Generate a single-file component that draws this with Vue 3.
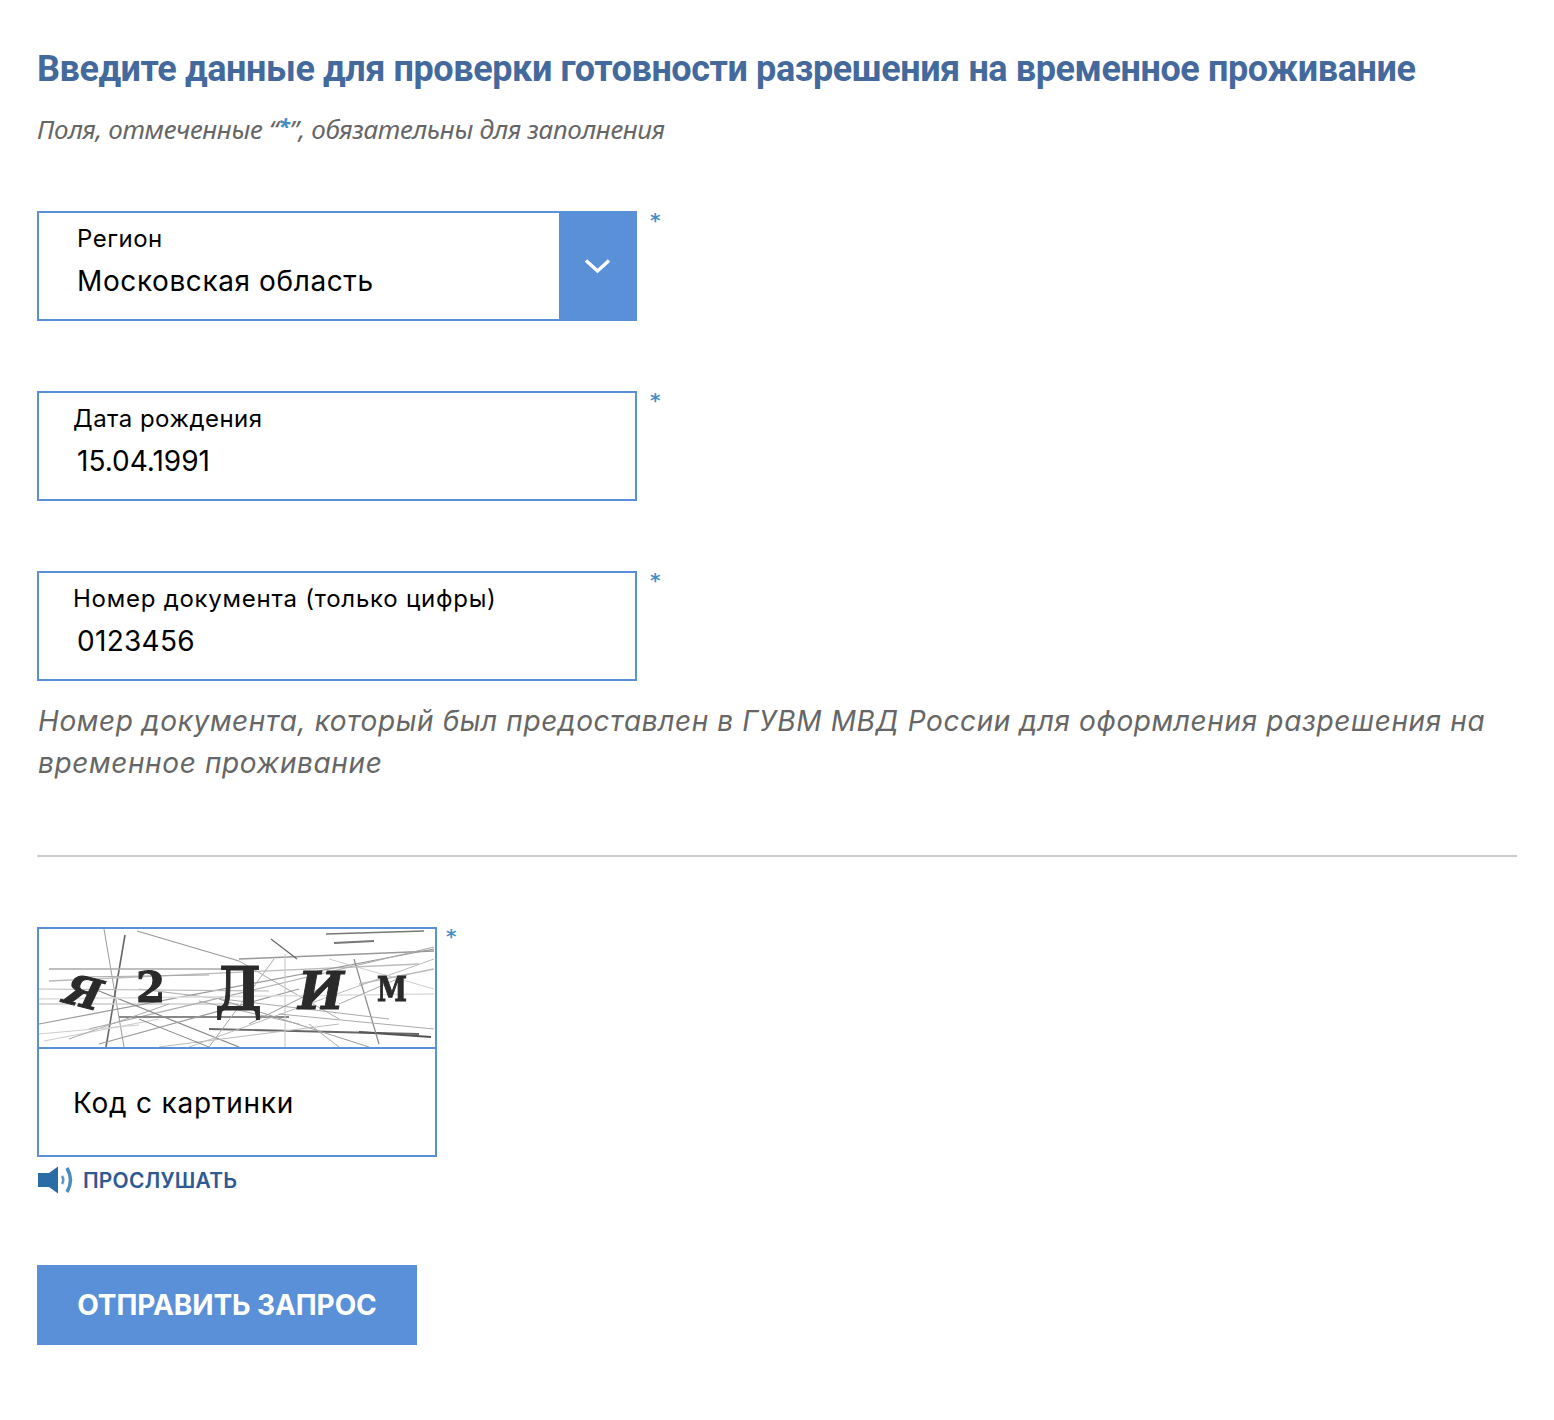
<script setup>
const lines = [
  [65,0,85,118,'#999',1],[86,6,67,118,'#666',1.6],[98,2,200,32,'#999',1.2],[200,32,300,90,'#aaa',1],[10,40,205,40,'#aaa',1.6],[10,52,380,35,'#bbb',1.4],
  [287,5,385,2,'#777',1.6],[295,14,335,12,'#777',2],[200,30,395,22,'#999',1.4],[0,75,200,75,'#ccc',1.4],[0,95,395,20,'#999',1.2],[50,100,395,18,'#aaa',1.2],
  [55,60,200,118,'#888',1.2],[80,88,250,88,'#888',1.8],[60,115,260,60,'#999',1.2],[170,100,380,105,'#666',1.8],[320,103,392,108,'#555',1.8],
  [150,118,395,30,'#bbb',1],[180,70,330,118,'#999',1],[246,25,246,118,'#ccc',1.2],[235,30,170,118,'#aaa',1],[315,30,340,115,'#888',1.2],
  [232,10,258,30,'#666',1.2],[5,112,120,90,'#ccc',1.2],[120,118,300,95,'#bbb',1],[290,30,395,60,'#ccc',1],[100,60,350,90,'#aaa',1],[0,70,395,65,'#ddd',1.6],
  [40,48,170,46,'#aaa',1],[0,60,230,62,'#bbb',1.2],[30,110,130,75,'#aaa',1],[100,90,170,118,'#888',1],[270,95,300,118,'#aaa',1],[240,85,395,100,'#aaa',1],
  [160,72,260,95,'#aaa',1],[300,75,370,45,'#aaa',1],[0,105,100,96,'#ccc',1],[210,95,280,60,'#999',1],[320,55,395,40,'#bbb',1.4]
]
const fields = [
  { label: 'Дата рождения', value: '15.04.1991', cls: 'date' },
  { label: 'Номер документа (только цифры)', value: '0123456', cls: 'doc' }
]
</script>

<template>
  <main class="page">
    <h1 class="title">Введите данные для проверки готовности разрешения на временное проживание</h1>
    <p class="note">Поля, отмеченные “<span class="note-star">*</span>”, обязательны для заполнения</p>

    <div class="row first">
      <div class="field select">
        <div class="select-text">
          <div class="label">Регион</div>
          <div class="value">Московская область</div>
        </div>
        <div class="arrow">
          <svg width="28" height="18" viewBox="0 0 28 18"><path d="M2 3.500 13.500 14 25 3.500" fill="none" stroke="#fff" stroke-width="3.500"/></svg>
        </div>
      </div>
      <span class="star">*</span>
    </div>

    <div v-for="f in fields" :key="f.cls" class="row next">
      <div class="field text" :class="f.cls">
        <div class="label">{{ f.label }}</div>
        <div class="value">{{ f.value }}</div>
      </div>
      <span class="star">*</span>
    </div>

    <p class="hint">Номер документа, который был предоставлен в ГУВМ МВД России для оформления разрешения на временное проживание</p>
    <hr class="divider" />

    <div class="row">
      <div class="captcha">
        <div class="captcha-img">
          <svg width="398" height="118" viewBox="0 0 398 118">
            <line v-for="(l, i) in lines" :key="i" :x1="l[0]" :y1="l[1]" :x2="l[2]" :y2="l[3]" :stroke="l[4]" :stroke-width="l[5]" />
            <text x="24" y="78" class="c1" transform="rotate(14 44 70)">Я</text>
            <text x="97" y="73" class="c2">2</text>
            <text x="176" y="81" class="c3" textLength="47" lengthAdjust="spacingAndGlyphs">Д</text>
            <text x="259" y="80" class="c4" textLength="46" lengthAdjust="spacingAndGlyphs">И</text>
            <text x="338" y="72" class="c5" textLength="30" lengthAdjust="spacingAndGlyphs">М</text>
          </svg>
        </div>
        <div class="captcha-input">Код с картинки</div>
      </div>
      <span class="star cap-star">*</span>
    </div>

    <a class="listen">
      <svg width="38" height="28" viewBox="0 0 38 28">
        <g class="speaker">
          <path d="M1 7h11l9-6.500v27L12 21H1z" fill="#2a6ca5"/>
          <path d="M25 10q2.500 4 0 8" fill="none" stroke="#5b95c4" stroke-width="2.500"/>
          <path d="M30 2q7 12 0 24" fill="none" stroke="#4d8bbd" stroke-width="3.500"/>
        </g>
      </svg>
      <span>ПРОСЛУШАТЬ</span>
    </a>

    <button class="submit">ОТПРАВИТЬ ЗАПРОС</button>
  </main>
</template>

<style scoped>
.page {
  box-sizing: border-box;
  width: 1554px;
  height: 1420px;
  padding: 46px 37px 0;
  background: #fff;
  font-family: Inter, "Open Sans", sans-serif;
  color: #000;
}
.title {
  margin: 0;
  font-family: Roboto, sans-serif;
  font-weight: 700;
  font-size: 36px;
  line-height: 46px;
  letter-spacing: -0.41px;
  color: #44699c;
  white-space: nowrap;
}
.note {
  margin: 18px 0 0;
  font-family: "Noto Sans", sans-serif;
  font-style: italic;
  font-size: 26px;
  line-height: 38px;
  letter-spacing: -0.34px;
  color: #666;
}
.note-star { color: #3f8cc7; position: relative; top: -5px; font-size: 22px; line-height: 0; font-weight: 700; }
.row { display: flex; align-items: flex-start; }
.first { margin-top: 63px; }
.next { margin-top: 70px; }
.star {
  margin-left: 13px;
  font-family: "DejaVu Sans", sans-serif;
  font-size: 20px;
  line-height: 18px;
  font-weight: 700;
  color: #4a8fc4;
}
.cap-star { margin-left: 9px; }
.field {
  box-sizing: border-box;
  width: 600px;
  height: 110px;
  border: 2px solid #5a90d7;
  background: #fff;
}
.select { display: flex; }
.select-text { flex: 1; padding: 11px 0 0 38px; }
.arrow {
  width: 78px;
  margin: -2px -2px -2px 0;
  background: #5a90d7;
  display: flex;
  align-items: center;
  justify-content: center;
}
.text { padding: 11px 0 0 34px; }
.label { font-size: 24px; line-height: 30px; letter-spacing: 0.48px; }
.doc .label { letter-spacing: 0.75px; }
.value { margin-top: 6px; font-size: 28px; line-height: 42px; letter-spacing: 0.6px; }
.date .value { padding-left: 4px; letter-spacing: 0; }
.doc .value { padding-left: 4px; letter-spacing: 0.3px; }
.hint {
  margin: 19px 0 0 1px;
  font-style: italic;
  font-size: 28px;
  line-height: 42px;
  letter-spacing: 0.62px;
  color: #666;
}
.divider {
  margin: 71px 0 70px;
  border: 0;
  height: 2px;
  width: 1480px;
  background: #ccc;
}
.captcha {
  box-sizing: border-box;
  width: 400px;
  height: 230px;
  border: 2px solid #5a90d7;
}
.captcha-img {
  height: 118px;
  border-bottom: 2px solid #5a90d7;
  overflow: hidden;
}
.captcha-img svg { display: block; filter: blur(0.6px); }
.captcha-img text { font-family: "DejaVu Serif", serif; font-weight: 700; fill: #2a2a2a; stroke: #2a2a2a; stroke-width: 1px; }
.c1 { font-size: 42px; font-style: italic; }
.c2 { font-size: 42px; }
.c3 { font-size: 60px; }
.c4 { font-size: 52px; font-style: italic; }
.c5 { font-size: 33px; }
.captcha-input {
  height: 100px;
  box-sizing: border-box;
  padding: 33px 0 0 34px;
  font-size: 28px;
  line-height: 42px;
  letter-spacing: 0.78px;
}
.speaker { filter: blur(0.5px); }
.listen {
  display: flex;
  align-items: center;
  gap: 8px;
  margin-top: 9px;
  height: 28px;
  font-size: 21px;
  font-weight: 600;
  letter-spacing: 0.2px;
  color: #2f5a92;
}
.submit {
  display: block;
  width: 380px;
  height: 80px;
  margin-top: 71px;
  padding: 0;
  border: 0;
  background: #5a90d7;
  color: #fff;
  font-family: inherit;
  font-weight: 700;
  font-size: 28px;
  letter-spacing: -0.1px;
}
</style>
